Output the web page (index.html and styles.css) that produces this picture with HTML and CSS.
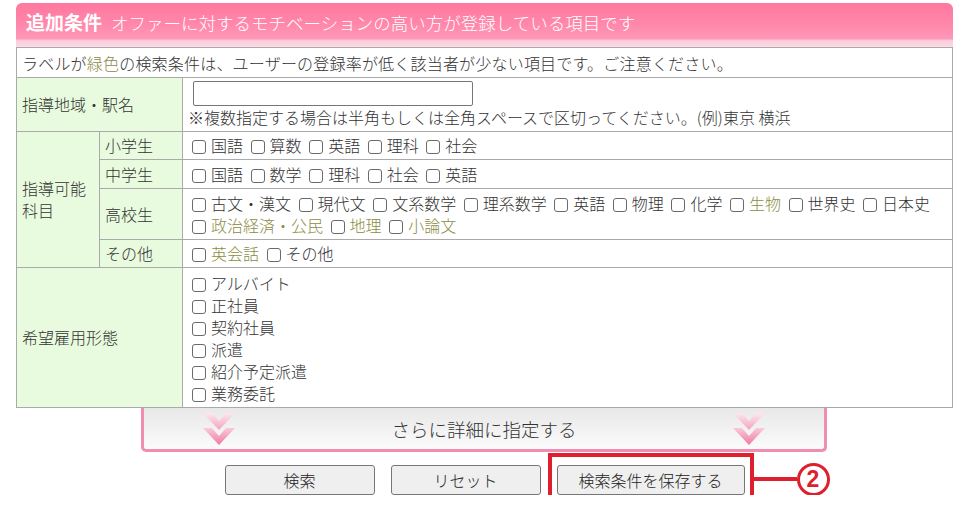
FILE: index.html
```html
<!DOCTYPE html>
<html lang="ja">
<head>
<meta charset="utf-8">
<title>追加条件</title>
<link rel="stylesheet" href="styles.css">
</head>
<body>
<div class="page">
  <div class="panel-head"><span class="title">追加条件</span><span class="sub">オファーに対するモチベーションの高い方が登録している項目です</span></div>
  <table class="cond">
    <colgroup><col class="c1"><col class="c2"><col></colgroup>
    <tr><td colspan="3" class="note">ラベルが<span class="g">緑色</span>の検索条件は、ユーザーの登録率が低く該当者が少ない項目です。ご注意ください。</td></tr>
    <tr><th colspan="2">指導地域・駅名</th><td class="area"><input type="text" class="txt">※複数指定する場合は半角もしくは全角スペースで区切ってください。(例)東京 横浜</td></tr>
    <tr><th rowspan="4">指導可能科目</th><th>小学生</th><td>
      <label class="cb"><input type="checkbox">国語</label>
      <label class="cb"><input type="checkbox">算数</label>
      <label class="cb"><input type="checkbox">英語</label>
      <label class="cb"><input type="checkbox">理科</label>
      <label class="cb"><input type="checkbox">社会</label>
    </td></tr>
    <tr class="tall"><th>中学生</th><td>
      <label class="cb"><input type="checkbox">国語</label>
      <label class="cb"><input type="checkbox">数学</label>
      <label class="cb"><input type="checkbox">理科</label>
      <label class="cb"><input type="checkbox">社会</label>
      <label class="cb"><input type="checkbox">英語</label>
    </td></tr>
    <tr class="tall"><th>高校生</th><td>
      <label class="cb"><input type="checkbox">古文・漢文</label>
      <label class="cb"><input type="checkbox">現代文</label>
      <label class="cb"><input type="checkbox">文系数学</label>
      <label class="cb"><input type="checkbox">理系数学</label>
      <label class="cb"><input type="checkbox">英語</label>
      <label class="cb"><input type="checkbox">物理</label>
      <label class="cb"><input type="checkbox">化学</label>
      <label class="cb"><input type="checkbox"><span class="g">生物</span></label>
      <label class="cb"><input type="checkbox">世界史</label>
      <label class="cb"><input type="checkbox">日本史</label>
      <label class="cb"><input type="checkbox"><span class="g">政治経済・公民</span></label>
      <label class="cb"><input type="checkbox"><span class="g">地理</span></label>
      <label class="cb"><input type="checkbox"><span class="g">小論文</span></label>
    </td></tr>
    <tr><th>その他</th><td>
      <label class="cb"><input type="checkbox"><span class="g">英会話</span></label>
      <label class="cb"><input type="checkbox">その他</label>
    </td></tr>
    <tr><th colspan="2">希望雇用形態</th><td class="list">
      <label class="cb"><input type="checkbox">アルバイト</label>
      <label class="cb"><input type="checkbox">正社員</label>
      <label class="cb"><input type="checkbox">契約社員</label>
      <label class="cb"><input type="checkbox">派遣</label>
      <label class="cb"><input type="checkbox">紹介予定派遣</label>
      <label class="cb"><input type="checkbox">業務委託</label>
    </td></tr>
  </table>
  <div class="more">
    <svg class="chev" width="32" height="33" viewBox="0 0 32 33" aria-hidden="true">
      <defs>
        <linearGradient id="ca1" x1="0" y1="0" x2="0" y2="1"><stop offset="0" stop-color="#fde6ee"/><stop offset="1" stop-color="#f4a3c0"/></linearGradient>
        <linearGradient id="cb1" x1="0" y1="0" x2="0" y2="1"><stop offset="0" stop-color="#fbc9da"/><stop offset="1" stop-color="#ee7aa4"/></linearGradient>
      </defs>
      <polygon points="0,0 9,0 16,8 23,0 32,0 16,17" fill="url(#ca1)"/>
      <polygon points="0,15 9,15 16,23 23,15 32,15 16,32" fill="url(#cb1)"/>
    </svg>
    <span class="more-text">さらに詳細に指定する</span>
    <svg class="chev" width="32" height="33" viewBox="0 0 32 33" aria-hidden="true">
      <defs>
        <linearGradient id="ca2" x1="0" y1="0" x2="0" y2="1"><stop offset="0" stop-color="#fde6ee"/><stop offset="1" stop-color="#f4a3c0"/></linearGradient>
        <linearGradient id="cb2" x1="0" y1="0" x2="0" y2="1"><stop offset="0" stop-color="#fbc9da"/><stop offset="1" stop-color="#ee7aa4"/></linearGradient>
      </defs>
      <polygon points="0,0 9,0 16,8 23,0 32,0 16,17" fill="url(#ca2)"/>
      <polygon points="0,15 9,15 16,23 23,15 32,15 16,32" fill="url(#cb2)"/>
    </svg>
  </div>
  <div class="actions">
    <button class="btn" type="button">検索</button>
    <button class="btn" type="button">リセット</button>
    <span class="annot"><button class="btn btn-save" type="button">検索条件を保存する</button><span class="annot-line"></span><span class="annot-num">2</span></span>
  </div>
</div>
</body>
</html>
```
FILE: styles.css
```css
* { box-sizing: border-box; }
body {
  margin: 0;
  background: #fff;
  font-family: "Noto Sans CJK JP", "Noto Sans", sans-serif;
  font-weight: 300;
  color: #333;
  font-size: 16px;
}
.page {
  width: 953px;
  padding: 3px 0 0 16px;
}
.panel-head {
  width: 937px;
  height: 44px;
  border-radius: 6px 6px 0 0;
  background: linear-gradient(to bottom, #ff779f 0%, #ff86aa 45%, #ff98b9 82%, #fcc9da 84%, #fbdbe6 100%);
  color: #fff;
  padding: 6px 10px 0;
  line-height: 26px;
  white-space: nowrap;
}
.title { font-size: 19px; font-weight: bold; }
.sub { font-size: 17.5px; margin-left: 9px; }

table.cond {
  width: 937px;
  border-collapse: collapse;
  table-layout: fixed;
}
col.c1, col.c2 { width: 83px; }
.cond th, .cond td {
  border: 1px solid #aaa;
  padding: 2px 5px 3px;
  line-height: 22px;
  font-size: 16px;
  font-weight: 300;
  text-align: left;
  vertical-align: middle;
}
.cond tr.tall td { padding: 3px 5px 3px; }
.cond th { background: #e9fbdf; }
.cond td.note { padding: 4px 5px 3px; letter-spacing: 0.2px; }
.cond td.area { padding: 3px 5px 3px; }
.cond td.list { padding: 4px 5px 3px; }
.g { color: #8b8c44; }
.txt {
  display: block;
  width: 280px;
  height: 25px;
  margin: 0 0 0 5px;
  border: 1px solid #767676;
  border-radius: 2px;
  background: #fff;
}
.cb { white-space: nowrap; }
.cb input {
  appearance: none;
  -webkit-appearance: none;
  width: 14px;
  height: 14px;
  margin: 0 5px 0 4px;
  border: 1px solid #6a6a6a;
  border-radius: 3px;
  background: #fff;
  vertical-align: -2px;
}
.list .cb { display: block; }

.more {
  width: 686px;
  height: 44px;
  margin: 0 0 0 125px;
  border: 3px solid #f08db0;
  border-top: none;
  border-radius: 0 0 5px 5px;
  background: linear-gradient(to bottom, #e8e8e8, #fbfbfb);
  display: flex;
  align-items: center;
  justify-content: space-between;
  padding: 0 59px;
}
.chev { display: block; margin-top: 2px; }
.more-text { font-size: 18.5px; color: #333; }

.actions {
  width: 937px;
  margin-top: 13px;
  display: flex;
  justify-content: center;
  gap: 16px;
}
.btn {
  height: 30px;
  width: 150px;
  font-family: "Noto Sans CJK JP", "Noto Sans", sans-serif;
  font-weight: 300;
  font-size: 16px;
  color: #222;
  background: #efefef;
  border: 1px solid #767676;
  border-radius: 3px;
  padding: 0;
}
.btn-save { width: 188px; }
.annot { position: relative; display: block; }
.annot::before {
  content: "";
  position: absolute;
  left: -9px;
  right: -9px;
  top: -12px;
  bottom: -10px;
  border: 4px solid #dd1f2e;
}
.annot-line {
  position: absolute;
  left: calc(100% + 8px);
  top: 12px;
  width: 44px;
  height: 4px;
  background: #dd1f2e;
}
.annot-num {
  position: absolute;
  left: calc(100% + 52px);
  top: -2px;
  width: 33px;
  height: 33px;
  border: 3px solid #dd1f2e;
  border-radius: 50%;
  color: #dd1f2e;
  font-family: "Liberation Sans", "Noto Sans", sans-serif;
  font-weight: bold;
  font-size: 23px;
  line-height: 27px;
  text-align: center;
}
```
